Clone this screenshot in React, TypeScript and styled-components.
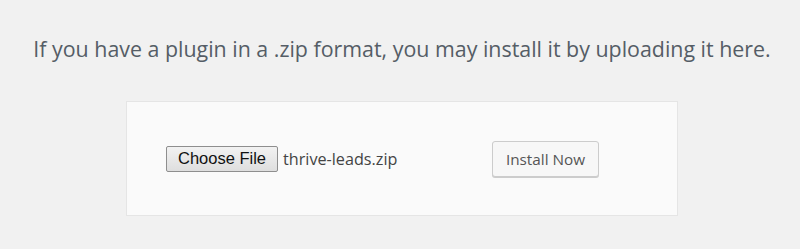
import React from 'react';
import styled, { createGlobalStyle } from 'styled-components';

const GlobalStyle = createGlobalStyle`
    html, body {
        margin: 0;
        padding: 0;
        background: #f1f1f1;
    }
    body {
        font-family: "Open Sans", "Noto Sans", sans-serif;
    }
`;

const Page = styled.div`
    width: 800px;
    height: 249px;
    box-sizing: border-box;
    padding-top: 33px;
    display: flex;
    flex-direction: column;
    align-items: center;
`;

const Intro = styled.p`
    margin: 0 0 0 4px;
    font-size: 21.4px;
    line-height: 32px;
    color: #555d66;
    white-space: nowrap;
`;

const Card = styled.form`
    margin: 36px 0 0 4px;
    width: 552px;
    height: 115px;
    box-sizing: border-box;
    background: #fafafa;
    border: 1px solid #e5e5e5;
    display: flex;
    align-items: center;
    padding: 0 0 0 39px;
`;

const FileField = styled.label`
    display: flex;
    align-items: center;
    width: 326px;
`;

const ChooseButton = styled.span`
    box-sizing: border-box;
    height: 26px;
    width: 112px;
    display: flex;
    align-items: center;
    justify-content: center;
    font-family: "Liberation Sans", Arial, sans-serif;
    font-size: 16.5px;
    color: #111;
    background: linear-gradient(#f2f2f2, #dedede);
    border: 1px solid #8e8e8e;
    border-radius: 2px;
`;

const FileName = styled.span`
    margin-left: 5px;
    font-size: 16.2px;
    color: #444;
`;

const InstallButton = styled.button`
    box-sizing: border-box;
    height: 36px;
    width: 107px;
    padding: 0;
    font-family: "Open Sans", "Noto Sans", sans-serif;
    font-size: 15.3px;
    color: #555;
    background: #f7f7f7;
    border: 1px solid #cccccc;
    border-radius: 3px;
    box-shadow: 0 1px 0 #cccccc;
    cursor: pointer;
`;

export default function App() {
    return (
        <>
            <GlobalStyle />
            <Page>
                <Intro>If you have a plugin in a .zip format, you may install it by uploading it here.</Intro>
                <Card onSubmit={e => e.preventDefault()}>
                    <FileField>
                        <ChooseButton>Choose File</ChooseButton>
                        <FileName>thrive-leads.zip</FileName>
                    </FileField>
                    <InstallButton type="submit">Install Now</InstallButton>
                </Card>
            </Page>
        </>
    );
}
